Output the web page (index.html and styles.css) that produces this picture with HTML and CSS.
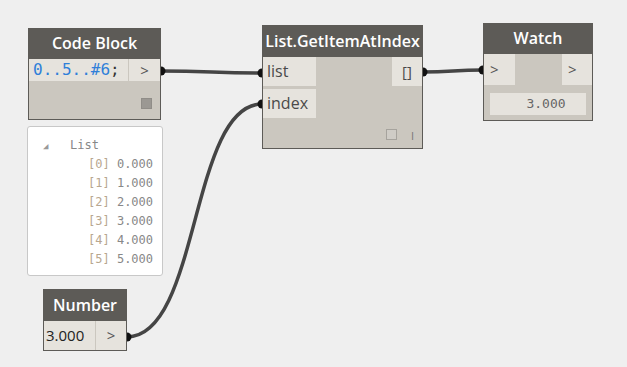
FILE: index.html
```html
<!DOCTYPE html>
<html lang="en">
<head>
    <meta charset="UTF-8">
    <meta name="viewport" content="width=device-width, initial-scale=1.0">
    <title>Dynamo graph</title>
    <link rel="stylesheet" href="styles.css">
</head>
<body>
    <div class="canvas">
        <svg class="wires" width="627" height="367">
            <path d="M161 71 C 210 71, 214 73, 262 73" />
            <path d="M127 337 C 200 337, 190 104, 262 104" />
            <path d="M423 72 C 453 72, 453 70, 483 70" />
            <circle cx="161" cy="71" r="4.5" />
            <circle cx="262" cy="73" r="4.5" />
            <circle cx="262" cy="104" r="4.5" />
            <circle cx="127" cy="337" r="4.5" />
            <circle cx="423" cy="72" r="4.5" />
            <circle cx="483" cy="70" r="4.5" />
        </svg>

        <!-- Code Block -->
        <div class="node code-node">
            <div class="node-title">Code Block</div>
            <div class="code-row">
                <div class="code-text"><span class="num">0..5..#6</span>;</div>
                <div class="port-out">&gt;</div>
            </div>
            <div class="node-foot">
                <span class="state-box filled"></span>
            </div>
        </div>

        <div class="preview">
            <div class="preview-head"><span class="tri">&#9698;</span>List</div>
            <div class="preview-row"><span class="idx">[0]</span> 0.000</div>
            <div class="preview-row"><span class="idx">[1]</span> 1.000</div>
            <div class="preview-row"><span class="idx">[2]</span> 2.000</div>
            <div class="preview-row"><span class="idx">[3]</span> 3.000</div>
            <div class="preview-row"><span class="idx">[4]</span> 4.000</div>
            <div class="preview-row"><span class="idx">[5]</span> 5.000</div>
        </div>

        <!-- List.GetItemAtIndex -->
        <div class="node getitem-node">
            <div class="node-title">List.GetItemAtIndex</div>
            <div class="getitem-body">
                <div class="inputs">
                    <div class="port-in">list</div>
                    <div class="port-in">index</div>
                </div>
                <div class="port-out-box">[]</div>
            </div>
            <div class="node-foot">
                <span class="state-box"></span>
                <span class="lacing">I</span>
            </div>
        </div>

        <!-- Watch -->
        <div class="node watch-node">
            <div class="node-title">Watch</div>
            <div class="watch-ports">
                <div class="port-box">&gt;</div>
                <div class="port-box">&gt;</div>
            </div>
            <div class="watch-value">3.000</div>
        </div>

        <!-- Number -->
        <div class="node number-node">
            <div class="node-title">Number</div>
            <div class="number-row">
                <div class="number-value">3.000</div>
                <div class="port-out">&gt;</div>
            </div>
        </div>
    </div>
</body>
</html>
```

FILE: styles.css
```css
body {
    margin: 0;
    padding: 0;
    background-color: #efefef;
    font-family: "Open Sans", "Noto Sans", sans-serif;
}
.canvas {
    position: relative;
    width: 627px;
    height: 367px;
    overflow: hidden;
}
.wires {
    position: absolute;
    left: 0;
    top: 0;
}
.wires path {
    fill: none;
    stroke: #454545;
    stroke-width: 3.5;
}
.wires circle {
    fill: #111;
}

/* nodes */
.node {
    position: absolute;
    box-sizing: border-box;
    display: flex;
    flex-direction: column;
    background-color: #cbc7bf;
    border: 1px solid #5d5b57;
    border-top: none;
}
.node-title {
    background-color: #5d5b57;
    color: #fff;
    font-size: 16px;
    font-weight: 600;
    text-align: center;
    line-height: 31px;
    height: 31px;
    margin: 0 -1px;
    white-space: nowrap;
}
.node-foot {
    flex: 1;
    display: flex;
    justify-content: flex-end;
    align-items: center;
    gap: 14px;
    padding-right: 8px;
}
.state-box {
    width: 9px;
    height: 9px;
    border: 1px solid #a6a39d;
    background-color: #cfccc6;
}
.state-box.filled {
    background-color: #9b9893;
    border-color: #908d88;
}
.lacing {
    font-size: 11px;
    color: #777;
    margin-top: 2px;
}

/* code block */
.code-node {
    left: 28px;
    top: 28px;
    width: 133px;
    height: 92px;
}
.code-node .node-foot {
    padding-top: 6px;
}
.code-row {
    display: flex;
    height: 22px;
    background-color: #e6e3dd;
}
.code-text {
    width: 100px;
    border-right: 1px solid #cbc7bf;
    font-family: "DejaVu Sans Mono", "Liberation Mono", monospace;
    font-size: 16px;
    line-height: 22px;
    padding-left: 4px;
    box-sizing: border-box;
    color: #333;
}
.code-text .num {
    color: #2f7fd9;
}
.port-out {
    flex: 1;
    text-align: center;
    font-size: 15px;
    line-height: 22px;
    color: #555;
}

/* preview bubble */
.preview {
    position: absolute;
    left: 27px;
    top: 126px;
    width: 136px;
    height: 150px;
    box-sizing: border-box;
    background-color: #fff;
    border: 1px solid #c8c8c8;
    border-radius: 3px;
    padding-top: 9px;
    font-family: "DejaVu Sans Mono", "Liberation Mono", monospace;
    font-size: 12px;
    color: #888;
}
.preview-head {
    height: 19px;
    line-height: 19px;
    padding-left: 15px;
}
.tri {
    display: inline-block;
    width: 27px;
    font-size: 9px;
    color: #999;
}
.preview-row {
    height: 19px;
    line-height: 19px;
    padding-left: 60px;
    white-space: pre;
}
.idx {
    color: #b8a78f;
}

/* get item at index */
.getitem-node {
    left: 262px;
    top: 25px;
    width: 161px;
    height: 124px;
}
.getitem-node .node-title {
    height: 32px;
    line-height: 32px;
}
.getitem-body {
    display: flex;
    justify-content: space-between;
}
.inputs {
    display: flex;
    flex-direction: column;
    gap: 3px;
}
.port-in {
    width: 53px;
    height: 29px;
    line-height: 28px;
    padding-left: 4px;
    box-sizing: border-box;
    background-color: #e6e3dd;
    font-size: 16px;
    color: #4a4a4a;
}
.port-out-box {
    width: 30px;
    height: 29px;
    line-height: 29px;
    text-align: center;
    background-color: #e6e3dd;
    font-size: 15px;
    color: #4a4a4a;
}
.getitem-node .node-foot {
    padding-right: 8px;
    padding-top: 2px;
}

/* watch */
.watch-node {
    left: 483px;
    top: 23px;
    width: 110px;
    height: 98px;
}
.watch-ports {
    display: flex;
    justify-content: space-between;
}
.port-box {
    width: 31px;
    height: 31px;
    line-height: 31px;
    padding-left: 6px;
    box-sizing: border-box;
    background-color: #e6e3dd;
    font-size: 15px;
    color: #555;
}
.watch-ports .port-box:last-child {
    width: 30px;
}
.watch-value {
    margin: 8px 6px 0 6px;
    height: 22px;
    line-height: 22px;
    background-color: #e6e3dd;
    font-family: "DejaVu Sans Mono", "Liberation Mono", monospace;
    font-size: 13px;
    color: #666;
    text-align: center;
    padding-left: 16px;
}

/* number */
.number-node {
    left: 43px;
    top: 289px;
    width: 84px;
    height: 62px;
}
.number-node .node-title {
    height: 32px;
    line-height: 32px;
}
.number-row {
    display: flex;
    flex: 1;
    background-color: #e6e3dd;
}
.number-value {
    width: 52px;
    border-right: 1px solid #cbc7bf;
    font-size: 15px;
    line-height: 29px;
    padding-left: 2px;
    box-sizing: border-box;
    color: #222;
}
.number-row .port-out {
    line-height: 29px;
}
```
